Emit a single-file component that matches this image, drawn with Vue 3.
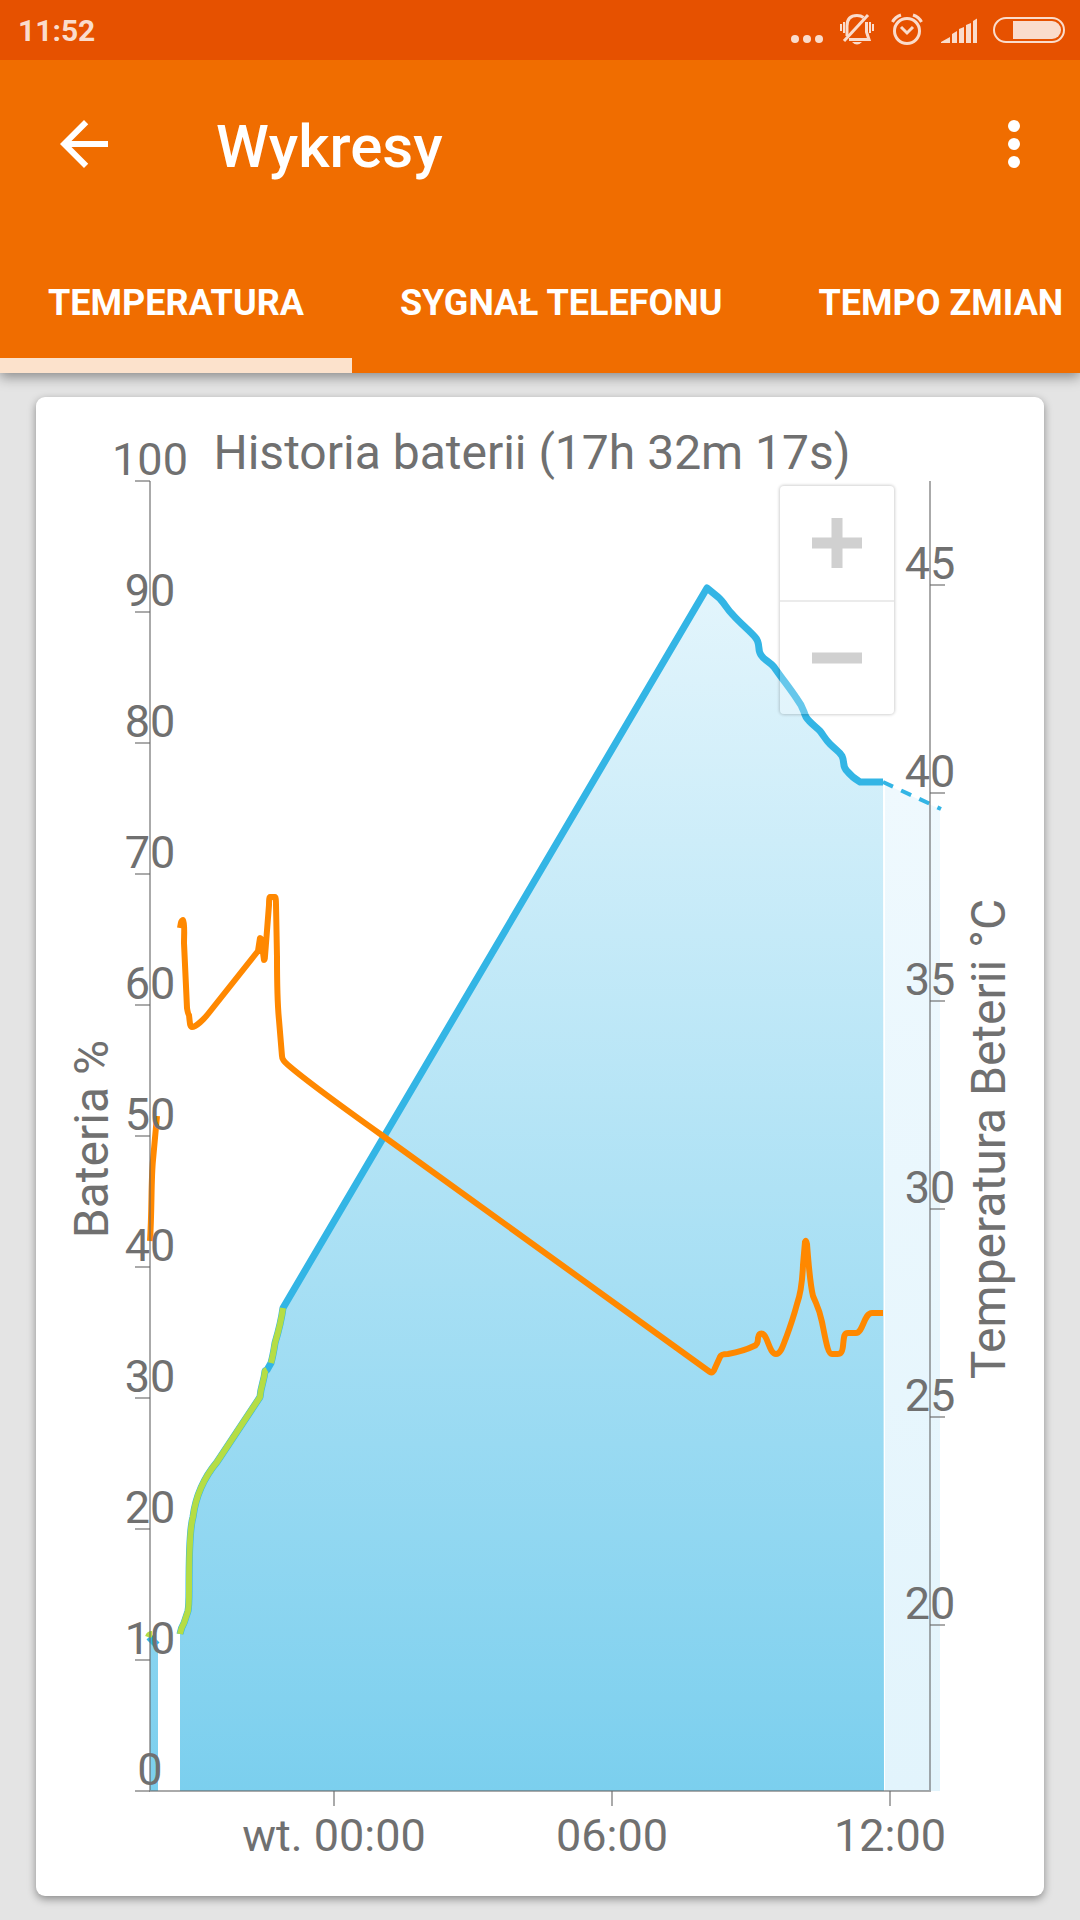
<script setup>
import { ref } from 'vue'

const tabs = ['TEMPERATURA', 'SYGNAŁ TELEFONU', 'TEMPO ZMIAN']
const active = ref(0)

// Plot area, in the units of the chart's viewBox
const plot = { left: 150, right: 930, top: 481, bottom: 1791 }

const percentTicks = Array.from({ length: 11 }, (_, i) => ({
  label: 100 - i * 10,
  y: plot.top + i * 131,
}))
const degreeTicks = [45, 40, 35, 30, 25, 20].map((label, i) => ({ label, y: 585 + i * 208 }))
const timeTicks = [
  { label: 'wt. 00:00', x: 334 },
  { label: '06:00', x: 612 },
  { label: '12:00', x: 890 },
]

const screenOnLow =
  'M180 1634 Q181 1628 184 1623 L188 1611 Q189 1606 189 1590 Q189 1530 193 1517 Q197 1486 217 1462 L260 1397 C261 1385 264 1382 265 1371 L267 1370'
const screenOnHigh = 'M271 1363 Q273 1356 275 1343 Q281 1323 283 1308'
const level =
  'L707 588 L718 597 C724 602 726 608 733 615 C740 623 750 631 755 637 C761 643 757 650 761 655 C764 660 770 662 774 667 C783 680 789 687 797 699 C804 708 803 711 806 717 C810 723 815 726 820 731 C824 736 825 739 830 744 C837 751 839 751 842 756 C845 762 842 767 847 771 C851 776 855 779 860 782 L883 782'
const batteryLine = `${screenOnLow} L271 1363 Q273 1356 275 1343 Q281 1323 283 1308 ${level}`
const batteryArea = `${batteryLine} L884 1791 L180 1791 Z`

const temperatureStart = 'M150 1241 C152 1210 151 1180 153 1160 L157 1116'
const temperatureLine =
  'M180 928 C181 922 181 921 183 920 C185 922 184 935 184 943 L187 1008 Q188 1014 189 1015 C190 1024 190 1027 192 1027 C196 1027 204 1019 208 1014 L258 951 L260 938 Q262 938 262 945 L264 960 Q265 960 265 956 L269 905 Q269 897 270 897 L275 897 Q276 897 276 905 L277 957 Q277 1000 279 1020 L282 1056 Q282 1060 288 1065 Q310 1084 383 1136 L710 1372 Q713 1374 715 1368 L720 1357 Q721 1354 728 1354 Q744 1351 754 1346 Q758 1345 758 1338 C759 1332 763 1332 766 1338 C769 1344 771 1354 776 1354 C781 1354 783 1345 786 1338 Q793 1319 797 1304 Q802 1290 803 1265 L805 1242 Q806 1239 807 1244 C809 1270 810 1284 813 1296 C818 1308 819 1308 822 1322 C826 1342 828 1354 832 1354 C840 1354 842 1355 843 1346 C844 1336 844 1333 848 1333 L856 1333 C863 1333 864 1313 872 1313 L883 1313'
</script>

<template>
  <div class="screen">
    <header class="header">
      <div class="status">
        <span class="clock">11:52</span>
        <div class="status-icons">
          <svg width="33" height="34" viewBox="0 0 33 34" aria-hidden="true">
            <g fill="currentColor">
              <circle cx="4" cy="26" r="4" />
              <circle cx="16" cy="26" r="4" />
              <circle cx="28" cy="26" r="4" />
            </g>
          </svg>
          <svg width="35" height="34" viewBox="0 0 35 34" aria-hidden="true">
            <g fill="none" stroke="currentColor" stroke-width="2">
              <path d="M7 23V13Q7 2.500 17 2.500Q21 2.500 23.500 4.500" stroke-width="3" />
              <path d="M26.500 9V19L29 26.500H9" stroke-width="3" />
              <path d="M28 2L4 28" stroke-width="3" />
              <path d="M1 11v7M4 9v11M30 9v11M33 11v7" />
            </g>
            <path d="M12 29H22Q17 34 12 29Z" fill="currentColor" />
          </svg>
          <svg width="34" height="34" viewBox="0 0 34 34" aria-hidden="true">
            <g fill="none" stroke="currentColor" stroke-width="3">
              <circle cx="16" cy="18" r="12.500" />
              <path d="M10 14L16 20L22 14" />
              <path d="M1.500 9Q4 4 10 2M22 2Q28 4 30.500 9" />
            </g>
          </svg>
          <svg width="36" height="34" viewBox="0 0 36 34" aria-hidden="true">
            <path
              d="M0 30V29L9 24V30ZM11 30V21L16 18V30ZM18 30V16L23 14V30ZM25 30V12L30 10V30ZM32 30V8L37 5V30Z"
              fill="currentColor"
            />
          </svg>
          <svg width="72" height="34" viewBox="0 0 72 34" aria-hidden="true">
            <rect x="1" y="5" width="70" height="24" rx="12" fill="none" stroke="currentColor" stroke-width="2" />
            <path d="M20 8H59A9 9 0 0 1 59 26H20Z" fill="currentColor" />
          </svg>
        </div>
      </div>

      <div class="toolbar">
        <button class="icon-button" type="button" aria-label="Wstecz">
          <svg width="72" height="72" viewBox="0 0 24 24" aria-hidden="true">
            <path d="M20 11H7.830l5.590-5.590L12 4l-8 8 8 8 1.410-1.410L7.830 13H20v-2z" fill="currentColor" />
          </svg>
        </button>
        <h1 class="title">Wykresy</h1>
        <button class="icon-button" type="button" aria-label="Więcej opcji">
          <svg width="72" height="72" viewBox="0 0 24 24" aria-hidden="true">
            <g fill="currentColor">
              <circle cx="12" cy="6" r="2" />
              <circle cx="12" cy="12" r="2" />
              <circle cx="12" cy="18" r="2" />
            </g>
          </svg>
        </button>
      </div>

      <div class="tabs" role="tablist">
        <button
          v-for="(tab, i) in tabs"
          :key="tab"
          type="button"
          role="tab"
          class="tab"
          :class="{ active: active === i }"
          :aria-selected="active === i"
          @click="active = i"
        >
          {{ tab }}
        </button>
      </div>
    </header>

    <main class="card">
      <svg class="chart" viewBox="36 397 1008 1499">
        <defs>
          <linearGradient id="fill" gradientUnits="userSpaceOnUse" x1="0" y1="587" x2="0" y2="1791">
            <stop offset="0" stop-color="#e3f5fc" />
            <stop offset="1" stop-color="#7bcfee" />
          </linearGradient>
          <linearGradient id="forecast" gradientUnits="userSpaceOnUse" x1="0" y1="782" x2="0" y2="1791">
            <stop offset="0" stop-color="#eff9fe" />
            <stop offset="1" stop-color="#e2f4fc" />
          </linearGradient>
        </defs>

        <path d="M885 784L940 809V1791H885Z" fill="url(#forecast)" />
        <path d="M150 1638L158 1645V1791H150Z" fill="url(#fill)" />
        <path :d="batteryArea" fill="url(#fill)" />

        <g class="series">
          <path d="M883 782L941 809" class="blue dashed" />
          <path :d="batteryLine" class="blue" />
          <path d="M149 1637L157 1645" class="blue" />
          <path :d="screenOnLow" class="green" />
          <path :d="screenOnHigh" class="green" />
          <path d="M148 1637Q149 1634 152 1634" class="green" />
          <path :d="temperatureStart" class="orange" />
          <path :d="temperatureLine" class="orange" />
        </g>

        <g class="axes">
          <path :d="`M${plot.left} ${plot.top}V${plot.bottom}H${plot.right}V${plot.top}`" />
          <path v-for="t in percentTicks" :key="t.label" :d="`M135 ${t.y}h15`" />
          <path v-for="t in degreeTicks" :key="t.label" :d="`M930 ${t.y}h15`" />
          <path v-for="t in timeTicks" :key="t.label" :d="`M${t.x} 1791v15`" />
        </g>

        <g class="labels">
          <text v-for="t in percentTicks" :key="t.label" :x="plot.left" :y="t.y - 6">{{ t.label }}</text>
          <text v-for="t in degreeTicks" :key="t.label" :x="plot.right" :y="t.y - 6">{{ t.label }}</text>
          <text v-for="t in timeTicks" :key="t.label" :x="t.x" y="1851">{{ t.label }}</text>
        </g>
        <g class="labels headings">
          <text x="532" y="469">Historia baterii (17h 32m 17s)</text>
          <text transform="translate(108 1139) rotate(-90)">Bateria %</text>
          <text transform="translate(1005 1139) rotate(-90)">Temperatura Beterii °C</text>
        </g>
      </svg>

      <div class="zoom">
        <button type="button" aria-label="Powiększ">
          <svg width="50" height="50" viewBox="0 0 50 50" aria-hidden="true">
            <path d="M0 25H50M25 0V50" />
          </svg>
        </button>
        <button type="button" aria-label="Pomniejsz">
          <svg width="50" height="50" viewBox="0 0 50 50" aria-hidden="true">
            <path d="M0 25H50" />
          </svg>
        </button>
      </div>
    </main>
  </div>
</template>

<style>
body {
  margin: 0;
  background: #e4e4e4;
}
</style>

<style scoped>
.screen {
  min-height: 100vh;
  overflow: hidden;
  font-family: Roboto, 'Noto Sans', sans-serif;
  background: #e4e4e4;
}

button {
  padding: 0;
  border: 0;
  background: none;
  color: inherit;
  font: inherit;
  cursor: pointer;
}

svg {
  display: block;
}

.header {
  position: relative;
  background: #f06d00;
  color: #fff;
  box-shadow: 0 4px 12px rgba(0, 0, 0, 0.4);
}

.status {
  display: flex;
  align-items: center;
  justify-content: space-between;
  height: 60px;
  padding: 0 15px 0 18px;
  background: #e65100;
  color: #fadccc;
}

.clock {
  font-size: 30px;
  font-weight: 700;
}

.status-icons {
  display: flex;
  gap: 16px;
}

.toolbar {
  display: flex;
  align-items: center;
  height: 168px;
  padding: 0 30px 0 48px;
}

.title {
  flex: 1;
  margin: 0;
  padding: 6px 0 0 96px;
  font-size: 60px;
  font-weight: 500;
  line-height: 72px;
}

.tabs {
  display: flex;
  overflow: hidden;
}

.tab {
  flex: none;
  height: 145px;
  padding: 20px 48px 0;
  border-bottom: 15px solid transparent;
  font-size: 36px;
  font-weight: 700;
  white-space: nowrap;
}

.tab.active {
  border-bottom-color: #fce2cc;
}

.card {
  position: relative;
  margin: 24px 36px;
  border-radius: 9px;
  background: #fff;
  box-shadow: 0 3px 9px rgba(0, 0, 0, 0.4);
}

.chart {
  width: 100%;
  height: auto;
}

.series path {
  fill: none;
  stroke-width: 6px;
  stroke-linejoin: round;
}

.series .blue {
  stroke: #33b5e5;
  stroke-width: 7px;
}

.series .dashed {
  stroke-width: 4px;
  stroke-dasharray: 11 9;
}

.series .green {
  stroke: #b5dd45;
}

.series .orange {
  stroke: #ff8800;
}

.axes path {
  fill: none;
  stroke: rgba(100, 100, 100, 0.55);
  stroke-width: 2px;
}

.labels {
  fill: #707070;
  font-size: 45px;
  text-anchor: middle;
}

.headings {
  font-size: 48px;
}

.zoom {
  position: absolute;
  top: 89px;
  right: 150px;
  display: flex;
  flex-direction: column;
  width: 114px;
  border-radius: 4px;
  background: rgba(255, 255, 255, 0.25);
  box-shadow: 0 0 3px 1px rgba(0, 0, 0, 0.18);
}

.zoom button {
  display: flex;
  align-items: center;
  justify-content: center;
  height: 114px;
}

.zoom button + button {
  border-top: 2px solid rgba(0, 0, 0, 0.08);
}

.zoom path {
  fill: none;
  stroke: #d0d0d0;
  stroke-width: 11px;
}
</style>
